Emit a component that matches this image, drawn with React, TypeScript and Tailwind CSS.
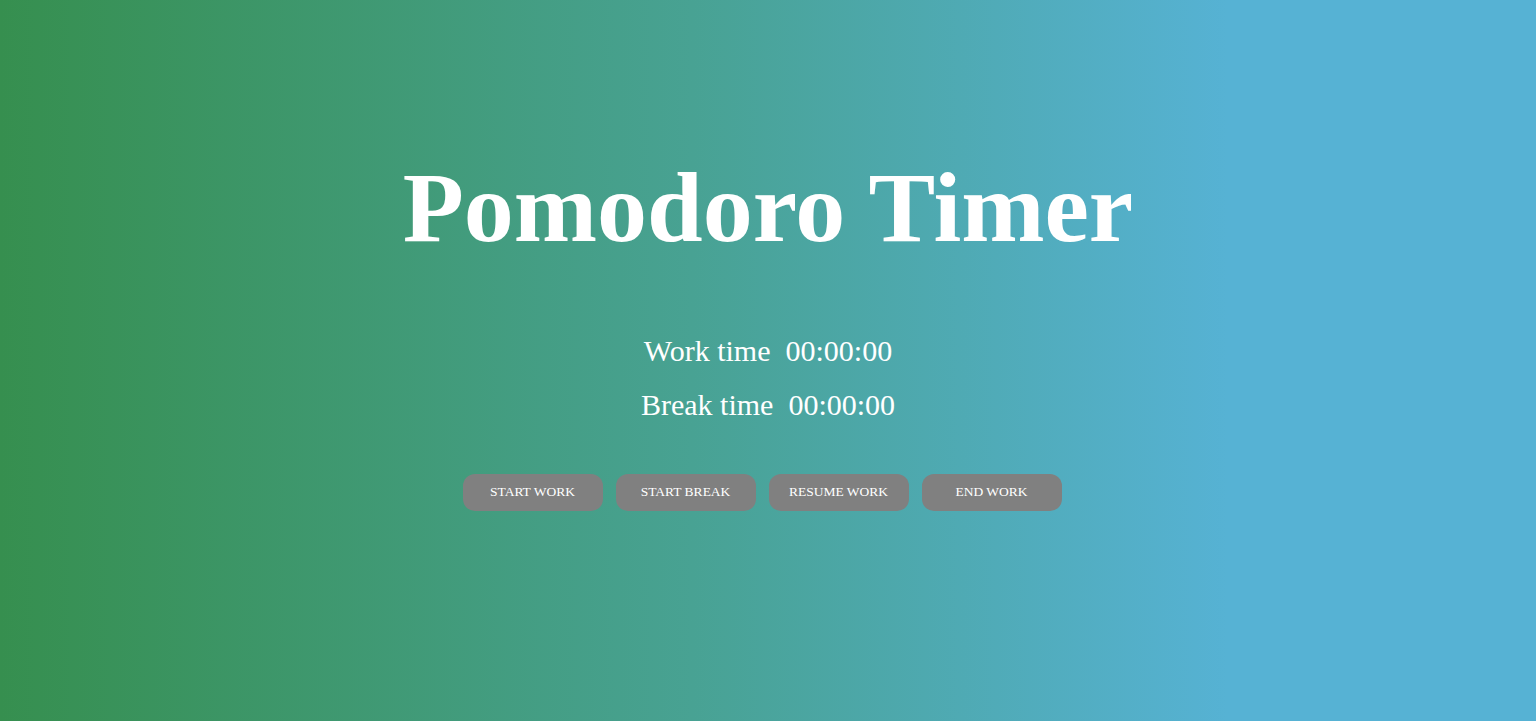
export default function App() {
  const buttons = ["START WORK", "START BREAK", "RESUME WORK", "END WORK"];
  return (
    <div
      className="w-full h-[721px] bg-[linear-gradient(to_right,#368f4f_0%,#48a293_45%,#56b2d4_80%,#56b2d4_100%)] flex flex-col items-center text-white"
      style={{ fontFamily: '"Liberation Serif", "Times New Roman", serif' }}
    >
      <h1 className="mt-[148px] text-[100px] leading-[120px] font-bold">Pomodoro Timer</h1>
      <div className="mt-[66px] flex flex-col items-center gap-[20px] text-[30px] leading-[34px]">
        <div className="whitespace-pre">Work time  00:00:00</div>
        <div className="whitespace-pre">Break time  00:00:00</div>
      </div>
      <div className="mt-[52px] flex gap-[13px] pr-[12px]">
        {buttons.map((b) => (
          <button
            key={b}
            className="w-[140px] h-[37px] rounded-[12px] bg-[#808080] text-white text-[13.5px]"
          >
            {b}
          </button>
        ))}
      </div>
    </div>
  );
}
